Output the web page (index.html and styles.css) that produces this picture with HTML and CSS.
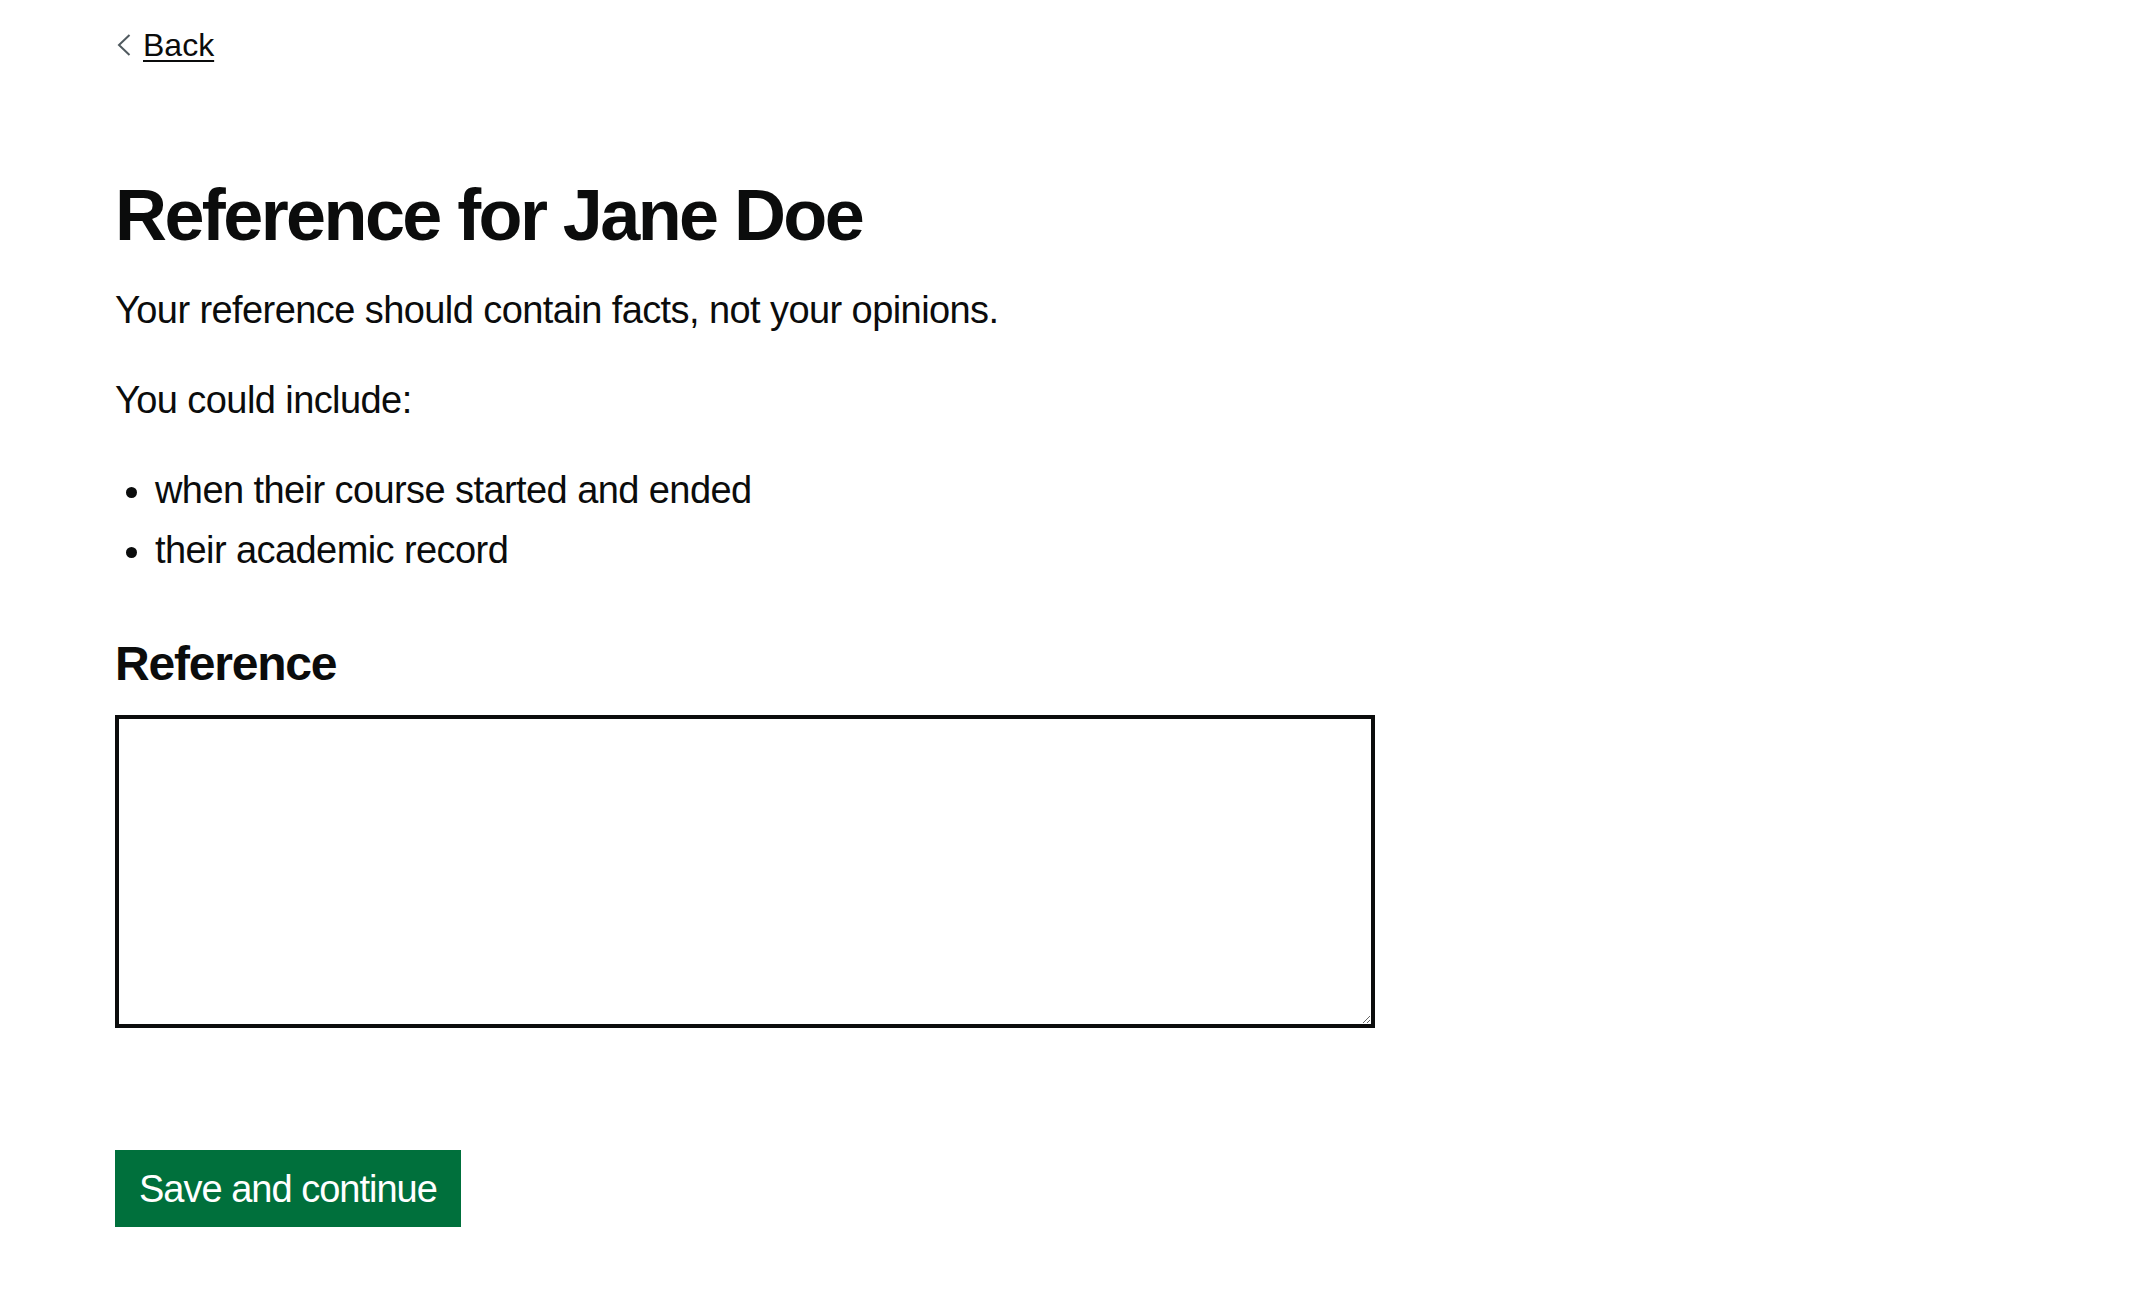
FILE: index.html
```html
<!DOCTYPE html>
<html lang="en">
<head>
<meta charset="utf-8">
<title>Reference for Jane Doe</title>
<link rel="stylesheet" href="styles.css">
</head>
<body>
<div class="container">
  <a class="back-link" href="#">
    <svg class="back-chevron" width="14" height="22" viewBox="0 0 14 22" aria-hidden="true"><path d="M12.5 1 L2 11 L12.5 21" fill="none" stroke="#505a5f" stroke-width="2"/></svg>
    <span class="back-text">Back</span>
  </a>
  <main class="main">
    <div class="two-thirds">
      <h1 class="heading">Reference for Jane Doe</h1>
      <p class="body">Your reference should contain facts, not your opinions.</p>
      <p class="body">You could include:</p>
      <ul class="list">
        <li>when their course started and ended</li>
        <li>their academic record</li>
      </ul>
      <form class="form">
        <div class="form-group">
          <label class="label" for="reference">Reference</label>
          <textarea class="textarea" id="reference" name="reference" rows="6"></textarea>
        </div>
        <button class="button" type="button">Save and continue</button>
      </form>
    </div>
  </main>
</div>
</body>
</html>
```
FILE: styles.css
```css
html, body {
  margin: 0;
  padding: 0;
  background: #ffffff;
}
body {
  font-family: "Liberation Sans", Arial, sans-serif;
  color: #0b0c0c;
}
.container {
  max-width: 1920px;
  margin: 0 auto;
}
.back-link {
  display: flex;
  width: max-content;
  align-items: center;
  margin-top: 25px;
  height: 40px;
  font-size: 32px;
  line-height: 40px;
  color: #0b0c0c;
  text-decoration: none;
}
.back-chevron {
  display: block;
  margin-left: 2px;
  margin-right: 12px;
  flex: none;
}
.back-text {
  text-decoration: underline;
  text-decoration-thickness: 2px;
  text-underline-offset: 4px;
}
.main {
  display: block;
  padding-top: 110px;
}
.two-thirds {
  width: 1260px;
}
.heading {
  margin: 0 0 30px;
  font-size: 72px;
  line-height: 80px;
  font-weight: 700;
  letter-spacing: -2.6px;
}
.body {
  margin: 0 0 40px;
  font-size: 38px;
  line-height: 50px;
  letter-spacing: -0.58px;
}
.list {
  margin: 0 0 59px;
  padding: 0 0 0 40px;
  list-style: disc;
  font-size: 38px;
  line-height: 50px;
  letter-spacing: -0.58px;
}
.list li {
  margin-bottom: 10px;
}
.form {
  margin: 0;
}
.form-group {
  margin-bottom: 122px;
}
.label {
  display: block;
  margin-bottom: 21px;
  font-size: 48px;
  line-height: 60px;
  font-weight: 700;
  letter-spacing: -1.2px;
}
.textarea {
  display: block;
  box-sizing: border-box;
  width: 100%;
  height: 313px;
  margin: 0;
  padding: 10px;
  border: 4px solid #0b0c0c;
  border-radius: 0;
  font-family: "Liberation Sans", Arial, sans-serif;
  font-size: 38px;
  line-height: 1.25;
  resize: vertical;
  background: #ffffff;
  outline: none;
}
.button {
  display: inline-block;
  margin: 0;
  padding: 16px 20px 15px;
  border: 4px solid transparent;
  border-radius: 0;
  background: #00703c;
  box-shadow: 0 4px 0 #002d18;
  color: #ffffff;
  font-family: "Liberation Sans", Arial, sans-serif;
  font-size: 38px;
  line-height: 38px;
  letter-spacing: -1px;
  cursor: pointer;
}
```
